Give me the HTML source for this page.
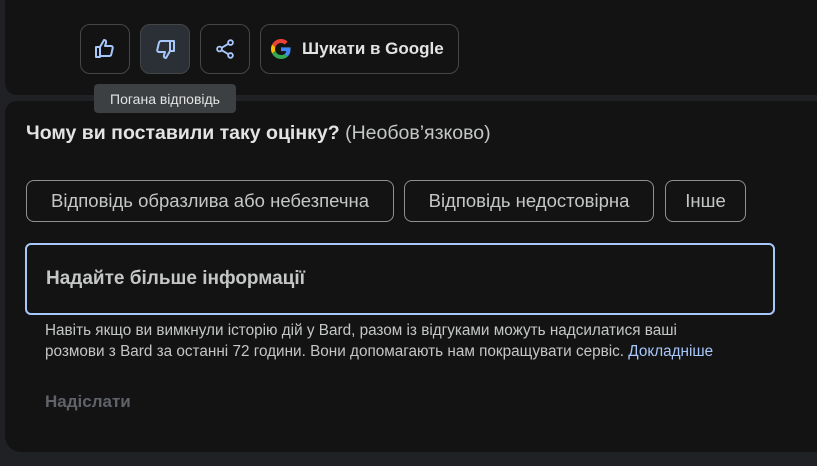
<!DOCTYPE html>
<html><head><meta charset="utf-8"><style>
body{margin:0;width:817px;height:466px;background:#202124;font-family:"Liberation Sans",sans-serif;position:relative;overflow:hidden;color:#e3e3e3}
.card{position:absolute;background:#131314}
.btn{position:absolute;top:24px;border:1px solid #444746;border-radius:10px;box-sizing:border-box;height:50px;display:flex;align-items:center;justify-content:center}
.chip{position:absolute;top:180px;height:42px;border:1px solid #8e918f;border-radius:8px;box-sizing:border-box;display:flex;align-items:center;justify-content:center;font-size:18.5px;color:#c4c7c5;white-space:nowrap}
</style></head><body>
<div class="card" style="left:5px;top:-10px;width:830px;height:105px;border-radius:0 0 0 12px"></div>
<div class="card" style="left:5px;top:101px;width:830px;height:351px;border-radius:12px 0 0 16px"></div>

<div class="btn" style="left:80px;width:50px">
<svg width="24" height="24" viewBox="0 0 24 24" fill="none" stroke="#a8c7fa" stroke-width="2" stroke-linejoin="round"><path d="M3 10h4v10H3z"/><path d="M7 10l4-7c1.5 0 2.5 1 2 3l-1 3h6c1.2 0 2 1 1.7 2.2l-1.5 6.5c-.3 1-1 1.3-2 1.3H7"/></svg></div>
<div class="btn" style="left:140px;width:50px;background:#2b2f36">
<svg width="24" height="24" viewBox="0 0 24 24" fill="none" stroke="#a8c7fa" stroke-width="2" stroke-linejoin="round"><path d="M17 4h4v10h-4z"/><path d="M17 14l-4 7c-1.5 0-2.5-1-2-3l1-3H6c-1.2 0-2-1-1.7-2.2l1.5-6.5C6.1 5.3 6.8 4 7.8 4H17"/></svg></div>
<div class="btn" style="left:200px;width:50px">
<svg width="22" height="22" viewBox="0 0 24 24" fill="none" stroke="#a8c7fa" stroke-width="2"><circle cx="18" cy="5" r="2.6"/><circle cx="6" cy="12" r="2.6"/><circle cx="18" cy="19" r="2.6"/><path d="M8.3 10.7l7.4-4.4M8.3 13.3l7.4 4.4"/></svg></div>
<div class="btn" style="left:260px;width:199px;justify-content:flex-start;padding-left:10px">
<svg width="20" height="20" viewBox="0 0 48 48"><path fill="#EA4335" d="M24 9.5c3.5 0 6.6 1.2 9.1 3.6l6.8-6.8C35.8 2.4 30.4 0 24 0 14.6 0 6.6 5.4 2.6 13.2l7.9 6.2C12.4 13.7 17.7 9.5 24 9.5z"/><path fill="#4285F4" d="M46.9 24.5c0-1.6-.1-3.1-.4-4.5H24v9h12.9c-.6 3-2.3 5.5-4.8 7.2l7.7 6c4.5-4.2 7.1-10.3 7.1-17.7z"/><path fill="#FBBC05" d="M10.5 28.6c-.5-1.4-.8-3-.8-4.6s.3-3.2.8-4.6l-7.9-6.2C.9 16.5 0 20.1 0 24s.9 7.5 2.6 10.8l7.9-6.2z"/><path fill="#34A853" d="M24 48c6.5 0 11.9-2.1 15.9-5.8l-7.7-6c-2.2 1.5-4.9 2.3-8.2 2.3-6.3 0-11.6-4.2-13.5-9.9l-7.9 6.2C6.6 42.6 14.6 48 24 48z"/></svg>
<span style="margin-left:11px;font-size:17px;font-weight:bold;color:#e3e3e3">Шукати в Google</span></div>

<div style="position:absolute;left:94px;top:84px;width:142px;height:29px;background:#3c4043;border-radius:4px;font-size:14px;color:#e3e3e3;display:flex;align-items:center;justify-content:center">Погана відповідь</div>

<div style="position:absolute;left:26px;top:122px;font-size:19.5px;white-space:nowrap"><b style="color:#e3e3e3">Чому ви поставили таку оцінку?</b> <span style="color:#c4c7c5">(Необов’язково)</span></div>

<div class="chip" style="left:26px;width:368px">Відповідь образлива або небезпечна</div>
<div class="chip" style="left:404px;width:250px">Відповідь недостовірна</div>
<div class="chip" style="left:665px;width:81px">Інше</div>

<div style="position:absolute;left:25px;top:243px;width:750px;height:72px;border:2px solid #a8c7fa;border-radius:6px;box-sizing:border-box;padding-left:19px;display:flex;align-items:center;font-size:19px;font-weight:bold;color:#c4c7c5">Надайте більше інформації</div>

<div style="position:absolute;left:45px;top:320px;font-size:15.3px;line-height:21px;color:#c4c7c5;width:740px;white-space:nowrap">Навіть якщо ви вимкнули історію дій у Bard, разом із відгуками можуть надсилатися ваші<br>розмови з Bard за останні 72 години. Вони допомагають нам покращувати сервіс. <span style="color:#a8c7fa">Докладніше</span></div>

<div style="position:absolute;left:45px;top:392px;font-size:17px;font-weight:bold;color:#5f6368">Надіслати</div>
</body></html>
